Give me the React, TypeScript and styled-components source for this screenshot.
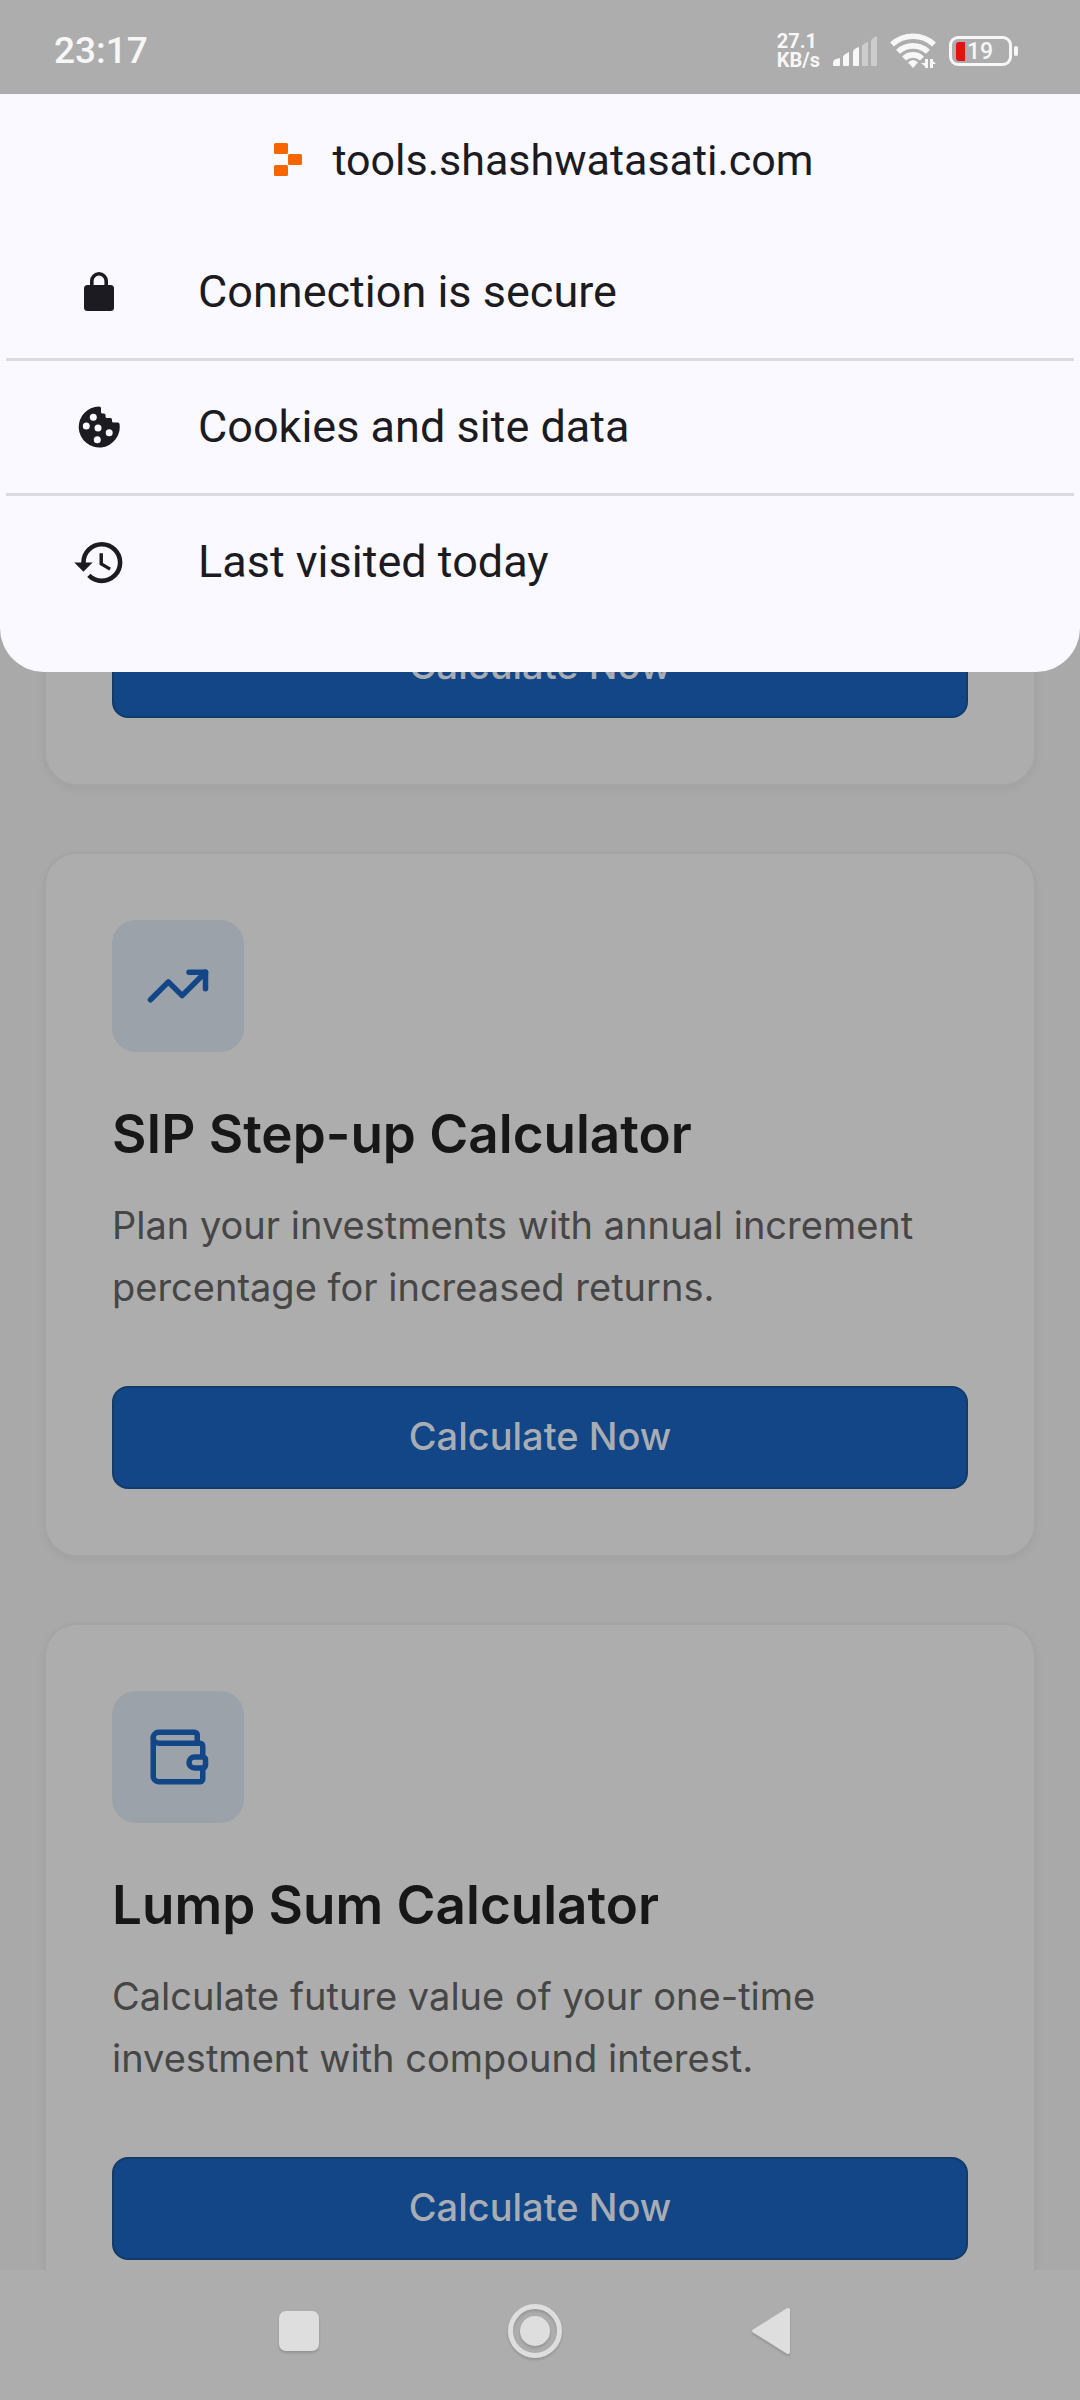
import React from "react";
import styled, { createGlobalStyle } from "styled-components";
import { TrendingUp, Wallet } from "lucide-react";

const colors = {
  bar: "#adadad",
  page: "#a9a9a9",
  card: "#adadad",
  cardBorder: "#a4a4a4",
  tile: "#9ca2a9",
  primary: "#124686",
  primaryBorder: "#133b69",
  onPrimary: "#a9adb3",
  heading: "#171717",
  body: "#464646",
  sheet: "#faf9ff",
  sheetInk: "#1b1b21",
  rule: "#dbdae0",
  status: "#f7f7f7",
};

const GlobalStyle = createGlobalStyle`
  *, *::before, *::after { box-sizing: border-box; }
  body { margin: 0; background: ${colors.page}; }
  button { font: inherit; color: inherit; border: 0; padding: 0; background: none; cursor: pointer; }
`;

const Screen = styled.div`
  display: flex;
  flex-direction: column;
  height: 100vh;
  overflow: hidden;
  background: ${colors.page};
`;

const StatusBar = styled.header`
  display: flex;
  flex: none;
  align-items: center;
  justify-content: space-between;
  height: 94px;
  padding: 8px 62px 0 54px;
  background: ${colors.bar};
  color: ${colors.status};
  font-family: Roboto, sans-serif;
`;

const Clock = styled.time`
  font-size: 37px;
  font-weight: 500;
  line-height: 44px;
`;

const StatusIcons = styled.div`
  display: flex;
  align-items: center;
  gap: 13px;
`;

const NetSpeed = styled.div`
  display: flex;
  flex-direction: column;
  font-size: 20px;
  font-weight: 700;
  line-height: 19px;
`;

const Battery = styled.div`
  display: flex;
  align-items: center;
  gap: 2px;
`;

const BatteryShell = styled.div`
  display: flex;
  align-items: center;
  gap: 2px;
  width: 63px;
  height: 30px;
  padding-left: 4px;
  border: 3px solid ${colors.status};
  border-radius: 9px;
  font-size: 23px;
  font-weight: 500;
  line-height: 24px;
`;

const BatteryCharge = styled.span`
  width: 9px;
  height: 19px;
  border-radius: 3px 0 0 3px;
  background: #e01212;
`;

const BatteryLevel = styled.span`
  padding-top: 2px;
`;

const BatteryTip = styled.span`
  width: 4px;
  height: 10px;
  border-radius: 2px;
  background: ${colors.status};
`;

const Sheet = styled.section`
  position: relative;
  z-index: 1;
  flex: none;
  padding-bottom: 44px;
  border-radius: 0 0 44px 44px;
  background: ${colors.sheet};
  color: ${colors.sheetInk};
  font-family: "Google Sans Text", "Google Sans", Roboto, sans-serif;
  font-size: 45px;
  line-height: 56px;
`;

const SiteHeader = styled.div`
  display: flex;
  align-items: center;
  justify-content: center;
  gap: 22px;
  height: 132px;
`;

const SiteName = styled.h1`
  margin: 0;
  font-size: 43px;
  font-weight: 400;
`;

const InfoList = styled.ul`
  margin: 0;
  padding: 0 6px;
  list-style: none;
`;

const InfoItem = styled.li`
  & + & { border-top: 3px solid ${colors.rule}; }
`;

const InfoRow = styled.button`
  display: flex;
  align-items: center;
  gap: 66px;
  width: 100%;
  height: 132px;
  padding: 0 60px;
  text-align: left;
`;

const IconSlot = styled.span`
  display: flex;
  flex: none;
  align-items: center;
  justify-content: center;
  width: 66px;
`;

const Feed = styled.main`
  display: flex;
  flex: 1;
  flex-direction: column;
  gap: 66px;
  min-height: 0;
  margin-top: -125px;
  padding: 0 44px;
  overflow: hidden;
  font-family: Inter, sans-serif;
`;

const Card = styled.article`
  flex: none;
  padding: 66px;
  border: 2px solid ${colors.cardBorder};
  border-radius: 33px;
  background: ${colors.card};
  box-shadow: 0 3px 8px rgba(0, 0, 0, 0.05);
`;

const IconTile = styled.div`
  display: flex;
  align-items: center;
  justify-content: center;
  width: 132px;
  height: 132px;
  margin-bottom: 44px;
  border-radius: 24px;
  background: ${colors.tile};
  color: ${colors.primary};
`;

const CardTitle = styled.h2`
  margin: 0 0 22px;
  color: ${colors.heading};
  font-size: 53px;
  font-weight: 600;
  line-height: 76px;
`;

const CardText = styled.p`
  margin: 0 0 68px;
  color: ${colors.body};
  font-size: 38px;
  line-height: 62px;
`;

const CardButton = styled.button`
  display: block;
  width: 100%;
  height: 103px;
  padding-bottom: 4px;
  border: 2px solid ${colors.primaryBorder};
  border-radius: 16px;
  background: ${colors.primary};
  color: ${colors.onPrimary};
  font-size: 38px;
  font-weight: 500;
`;

const NavBar = styled.nav`
  display: flex;
  flex: none;
  justify-content: center;
  height: 130px;
  padding: 0 10px 8px 0;
  background: ${colors.bar};
  color: #dedede;
`;

const NavButton = styled.button`
  display: flex;
  align-items: center;
  justify-content: center;
  width: 236px;
  filter: drop-shadow(0 2px 1px rgba(0, 0, 0, 0.14));
`;

const SignalIcon = () => (
  <svg width="44" height="30" viewBox="0 0 44 30" fill="currentColor" aria-hidden="true">
    <path d="M0 29v-2q0-3 3-4l4-1v7q0 1-1 1H1q-1 0-1-1z" />
    <path d="M10 29V21q0-2 6-5v13q0 1-1 1h-4q-1 0-1-1z" />
    <path d="M20 29V16q0-3 6-5v18q0 1-1 1h-4q-1 0-1-1z" />
    <path opacity=".42" d="M29 29V11q0-3 6-5v23q0 1-1 1h-4q-1 0-1-1z" />
    <path opacity=".42" d="M38 29V6q0-4 6-6v29q0 1-1 1h-4q-1 0-1-1z" />
  </svg>
);

const WifiIcon = () => (
  <svg width="46" height="36" viewBox="0 0 46 36" fill="none" stroke="currentColor" strokeWidth="5.600" aria-hidden="true">
    <path d="M2 11.500A31 31 0 0 1 44 11.500" />
    <path d="M8 18.800A22 22 0 0 1 38 18.800" />
    <path d="M14 25.500A13 13 0 0 1 32 25.500" />
    <path d="M18 29.500q5-5 10 0L23 35z" fill="currentColor" stroke="none" />
    <path d="M36.500 26v9M41.500 35v-9" strokeWidth="3" />
    <path d="M37 35l-6-5h6zM41 26l5 5h-5z" fill="currentColor" stroke="none" />
  </svg>
);

const Favicon = () => (
  <svg width="44" height="44" viewBox="0 0 44 44" fill="#f56600" aria-hidden="true">
    <rect x="8" y="5" width="14" height="11" rx="1.500" />
    <rect x="22" y="16" width="14" height="11" rx="1.500" />
    <rect x="8" y="27" width="14" height="11" rx="1.500" />
  </svg>
);

const LockIcon = () => (
  <svg width="30" height="40" viewBox="0 0 30 40" aria-hidden="true">
    <rect y="13" width="30" height="26" rx="3.500" fill="currentColor" />
    <path d="M7.800 14V9a7.200 7.200 0 0 1 14.400 0v5" fill="none" stroke="currentColor" strokeWidth="3.600" />
  </svg>
);

const CookieIcon = () => (
  <svg width="42" height="42" viewBox="0 0 42 42" aria-hidden="true">
    <path
      fill="currentColor"
      d="M21 .5A20.500 20.500 0 1 0 41.500 18q-.2-1.500-1.500-1.500h-4.500q-1.500 0-1.500-1.500v-1.500q0-1.500-1.500-1.500H29q-1.500 0-1.500-1.500V9q0-1.500-1.500-1.500h-1.500Q23 7.500 23 6V2q0-1.500-2-1.500z"
    />
    <g fill={colors.sheet}>
      <circle cx="15.300" cy="11.200" r="3.500" />
      <circle cx="8.300" cy="20" r="3.500" />
      <circle cx="20" cy="22" r="3.500" />
      <circle cx="31.200" cy="26.800" r="3.500" />
      <circle cx="19.300" cy="33.700" r="3.500" />
    </g>
  </svg>
);

const HistoryIcon = () => (
  <svg width="55" height="55" viewBox="0 0 24 24" fill="currentColor" aria-hidden="true">
    <path d="M13 3a9 9 0 0 0-9 9H1l3.890 3.890.07.14L9 12H6c0-3.870 3.130-7 7-7s7 3.130 7 7-3.130 7-7 7c-1.930 0-3.680-.79-4.940-2.060l-1.420 1.420A8.954 8.954 0 0 0 13 21a9 9 0 0 0 0-18zm-1 5v5l4.280 2.540.72-1.210-3.500-2.080V8H12z" />
  </svg>
);

const infoRows = [
  { label: "Connection is secure", Icon: LockIcon },
  { label: "Cookies and site data", Icon: CookieIcon },
  { label: "Last visited today", Icon: HistoryIcon },
];

const tools = [
  {
    title: "SIP Step-up Calculator",
    text: "Plan your investments with annual increment percentage for increased returns.",
    Icon: TrendingUp,
  },
  {
    title: "Lump Sum Calculator",
    text: "Calculate future value of your one-time investment with compound interest.",
    Icon: Wallet,
  },
];

export default function App() {
  return (
    <Screen>
      <GlobalStyle />
      <StatusBar>
        <Clock>23:17</Clock>
        <StatusIcons>
          <NetSpeed>
            <span>27.1</span>
            <span>KB/s</span>
          </NetSpeed>
          <SignalIcon />
          <WifiIcon />
          <Battery>
            <BatteryShell>
              <BatteryCharge />
              <BatteryLevel>19</BatteryLevel>
            </BatteryShell>
            <BatteryTip />
          </Battery>
        </StatusIcons>
      </StatusBar>

      <Sheet>
        <SiteHeader>
          <Favicon />
          <SiteName>tools.shashwatasati.com</SiteName>
        </SiteHeader>
        <InfoList>
          {infoRows.map(({ label, Icon }) => (
            <InfoItem key={label}>
              <InfoRow type="button">
                <IconSlot>
                  <Icon />
                </IconSlot>
                {label}
              </InfoRow>
            </InfoItem>
          ))}
        </InfoList>
      </Sheet>

      <Feed>
        <Card>
          <CardButton type="button">Calculate Now</CardButton>
        </Card>
        {tools.map(({ title, text, Icon }) => (
          <Card key={title}>
            <IconTile>
              <Icon size={66} strokeWidth={2} />
            </IconTile>
            <CardTitle>{title}</CardTitle>
            <CardText>{text}</CardText>
            <CardButton type="button">Calculate Now</CardButton>
          </Card>
        ))}
      </Feed>

      <NavBar>
        <NavButton type="button" aria-label="Recent apps">
          <svg width="40" height="40" viewBox="0 0 40 40" fill="currentColor">
            <rect width="40" height="40" rx="7" />
          </svg>
        </NavButton>
        <NavButton type="button" aria-label="Home">
          <svg width="54" height="54" viewBox="0 0 54 54" fill="currentColor">
            <circle cx="27" cy="27" r="24.500" fill="none" stroke="currentColor" strokeWidth="5" />
            <circle cx="27" cy="27" r="15" />
          </svg>
        </NavButton>
        <NavButton type="button" aria-label="Back">
          <svg width="38" height="46" viewBox="0 0 38 46" fill="currentColor">
            <path d="M1 21.500 34.500.6Q38-1 38 2v42q0 3-3.500 1.400L1 24.500q-2-1.500 0-3z" />
          </svg>
        </NavButton>
      </NavBar>
    </Screen>
  );
}
